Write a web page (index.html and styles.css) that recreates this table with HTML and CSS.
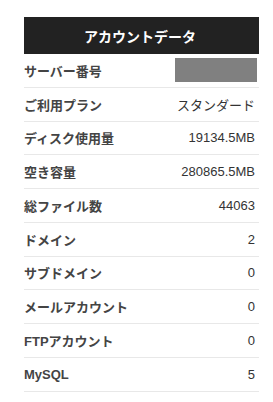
FILE: index.html
```html
<!DOCTYPE html>
<html lang="ja">
<head>
<meta charset="utf-8">
<link rel="stylesheet" href="styles.css">
</head>
<body>
<div class="panel">
  <div class="panel-head">アカウントデータ</div>
  <div class="row"><span class="label">サーバー番号</span><span class="value"><span class="masked"></span></span></div>
  <div class="row"><span class="label">ご利用プラン</span><span class="value">スタンダード</span></div>
  <div class="row"><span class="label">ディスク使用量</span><span class="value">19134.5MB</span></div>
  <div class="row"><span class="label">空き容量</span><span class="value">280865.5MB</span></div>
  <div class="row"><span class="label">総ファイル数</span><span class="value">44063</span></div>
  <div class="row"><span class="label">ドメイン</span><span class="value">2</span></div>
  <div class="row"><span class="label">サブドメイン</span><span class="value">0</span></div>
  <div class="row"><span class="label">メールアカウント</span><span class="value">0</span></div>
  <div class="row"><span class="label">FTPアカウント</span><span class="value">0</span></div>
  <div class="row"><span class="label">MySQL</span><span class="value">5</span></div>
</div>
</body>
</html>
```
FILE: styles.css
```css
html, body {
  margin: 0;
  padding: 0;
  background: #fff;
}
body {
  font-family: "Liberation Sans", "Noto Sans CJK JP", sans-serif;
  font-size: 13px;
  color: #333;
}
.panel {
  margin: 17px 14px 0 24px;
  width: 235px;
}
.panel-head {
  background: #222;
  color: #fff;
  font-weight: bold;
  font-size: 14px;
  height: 37px;
  display: flex;
  align-items: center;
  justify-content: center;
  padding-right: 3px;
}
.row {
  display: flex;
  justify-content: space-between;
  align-items: center;
  height: 32.75px;
  border-bottom: 1px solid #e8e8e8;
}
.label {
  font-weight: bold;
  color: #444;
}
.value {
  padding-right: 4px;
  display: flex;
  align-items: center;
}
.masked {
  display: block;
  width: 82px;
  height: 24px;
  background: #808080;
  margin-right: -2px;
}
```
